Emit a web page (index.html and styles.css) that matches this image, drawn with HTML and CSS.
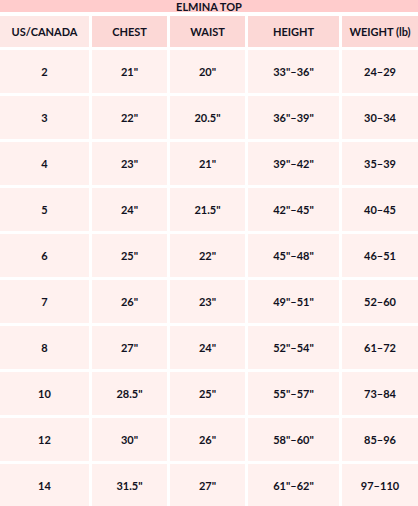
FILE: index.html
```html
<!DOCTYPE html>
<html>
<head>
<meta charset="utf-8">
<link rel="stylesheet" href="styles.css">
</head>
<body>
<div class="sheet">
  <div class="title">ELMINA TOP</div>
  <div class="grid">
    <div class="cell head first">US/CANADA</div>
    <div class="cell head">CHEST</div>
    <div class="cell head">WAIST</div>
    <div class="cell head">HEIGHT</div>
    <div class="cell head">WEIGHT (lb)</div>

    <div class="cell">2</div><div class="cell">21"</div><div class="cell">20"</div><div class="cell">33"–36"</div><div class="cell">24–29</div>
    <div class="cell">3</div><div class="cell">22"</div><div class="cell">20.5"</div><div class="cell">36"–39"</div><div class="cell">30–34</div>
    <div class="cell">4</div><div class="cell">23"</div><div class="cell">21"</div><div class="cell">39"–42"</div><div class="cell">35–39</div>
    <div class="cell">5</div><div class="cell">24"</div><div class="cell">21.5"</div><div class="cell">42"–45"</div><div class="cell">40–45</div>
    <div class="cell">6</div><div class="cell">25"</div><div class="cell">22"</div><div class="cell">45"–48"</div><div class="cell">46–51</div>
    <div class="cell">7</div><div class="cell">26"</div><div class="cell">23"</div><div class="cell">49"–51"</div><div class="cell">52–60</div>
    <div class="cell">8</div><div class="cell">27"</div><div class="cell">24"</div><div class="cell">52"–54"</div><div class="cell">61–72</div>
    <div class="cell">10</div><div class="cell">28.5"</div><div class="cell">25"</div><div class="cell">55"–57"</div><div class="cell">73–84</div>
    <div class="cell">12</div><div class="cell">30"</div><div class="cell">26"</div><div class="cell">58"–60"</div><div class="cell">85–96</div>
    <div class="cell">14</div><div class="cell">31.5"</div><div class="cell">27"</div><div class="cell">61"–62"</div><div class="cell">97–110</div>
  </div>
</div>
</body>
</html>
```
FILE: styles.css
```css
html, body {
  margin: 0;
  padding: 0;
  background: #ffffff;
}
body {
  width: 418px;
  height: 506px;
  overflow: hidden;
  font-family: Lato, "Liberation Sans", sans-serif;
  font-weight: bold;
  font-size: 11px;
  color: #111122;
}
.sheet {
  display: flex;
  flex-direction: column;
}
.title {
  height: 12px;
  line-height: 13px;
  background: #ffcccc;
  text-align: center;
  margin-bottom: 4px;
}
.grid {
  display: grid;
  grid-template-columns: 89px 75px 75px 91px 76px;
  grid-template-rows: 31px;
  grid-auto-rows: 43px;
  gap: 3px;
}
.cell {
  display: flex;
  align-items: center;
  justify-content: center;
  background: #fff1ef;
}
.head {
  background: #fcd8d6;
}
.head.first {
  background: #fde8e6;
}
```
